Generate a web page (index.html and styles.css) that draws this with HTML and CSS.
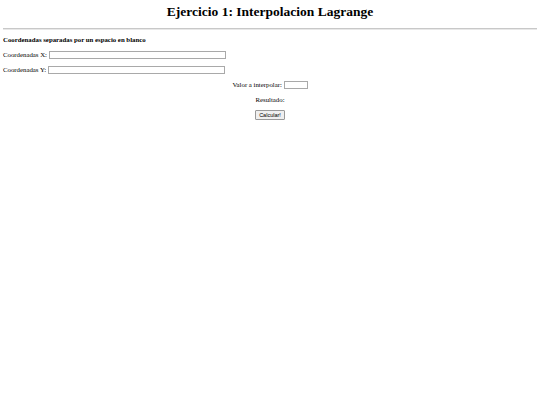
FILE: index.html
```html
<!DOCTYPE html>
<html>
<head>
<meta charset="utf-8">
<link rel="stylesheet" href="styles.css">
</head>
<body>
<h1 class="title">Ejercicio 1: Interpolacion Lagrange</h1>
<hr class="rule">
<p class="note">Coordenadas separadas por un espacio en blanco</p>
<p class="row">Coordenadas X: <input class="wide" type="text"></p>
<p class="row">Coordenadas Y: <input class="wide" type="text"></p>
<p class="center">Valor a interpolar: <input class="small" type="text"></p>
<p class="center">Resultado:</p>
<p class="center"><button class="btn">Calcular!</button></p>
</body>
</html>
```
FILE: styles.css
```css
html, body { background: #fff; }
body {
  margin: 3px;
  font-family: "Liberation Serif", "Times New Roman", serif;
  font-size: 6.8px;
  color: #000;
}
.title {
  font-size: 13.5px;
  font-weight: bold;
  text-align: center;
  margin: 1px 0 8px 0;
  line-height: 16px;
}
.rule {
  border: 0;
  border-top: 1px solid #c8c8c8;
  border-bottom: 1px solid #e8e8e8;
  margin: 0;
  height: 0;
}
.note { font-weight: bold; margin: 5px 0 0 0; line-height: 9px; }
.row { margin: 6px 0 0 0; line-height: 9px; display: flex; align-items: center; gap: 2px; }
.center { text-align: center; margin: 6px 0 0 0; line-height: 9px; }
.wide {
  width: 177px; height: 8px; box-sizing: border-box;
  border: 1px solid #a9a9a9; padding: 0; margin: 0; font-size: 6px;
}
.small {
  width: 24px; height: 8px; box-sizing: border-box;
  border: 1px solid #a9a9a9; padding: 0; margin: 0; font-size: 6px; vertical-align: middle;
}
.btn {
  font-family: "Liberation Sans", Arial, sans-serif;
  font-size: 5.5px; padding: 1px 3px; margin: 0;
  border: 1px solid #999; border-radius: 1px; background: #efefef; line-height: 6px;
}
```
